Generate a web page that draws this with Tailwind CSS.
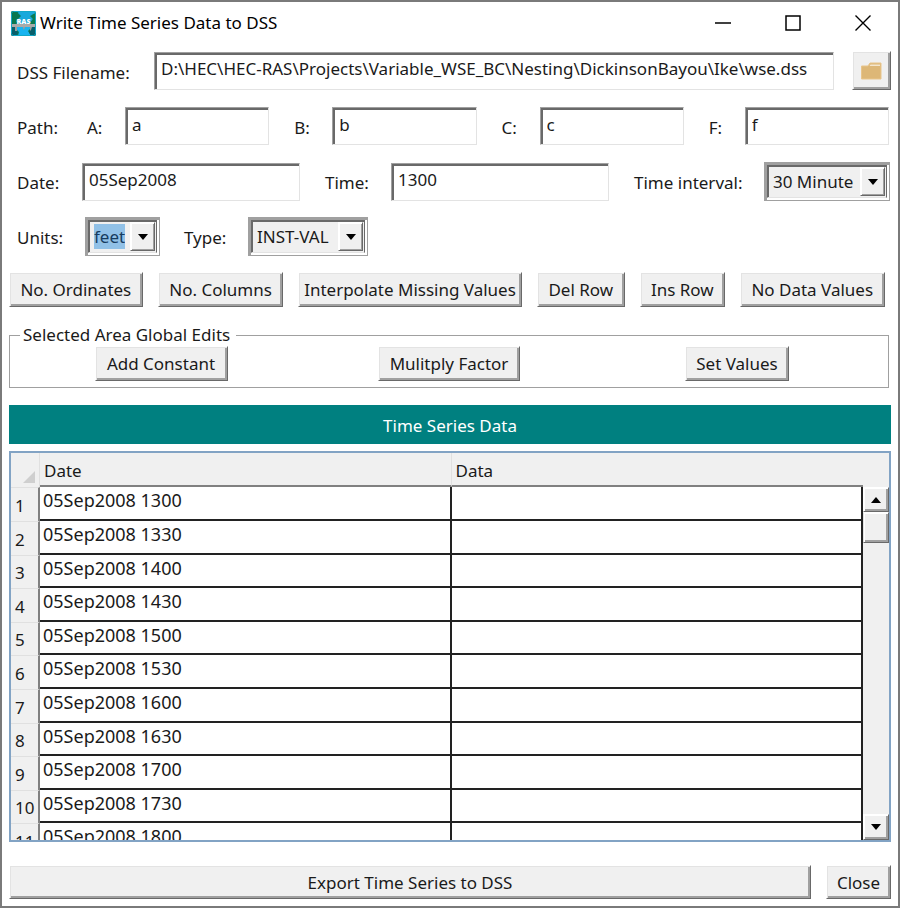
<!DOCTYPE html>
<html lang="en">
<head>
<meta charset="utf-8">
<title>Write Time Series Data to DSS</title>
<script src="https://cdn.jsdelivr.net/npm/@tailwindcss/browser@4"></script>
</head>
<body class="bg-white">
<div class="flex h-screen min-h-[600px] flex-col border-2 border-[#7a7a7a] bg-white font-['Noto_Sans','Open_Sans',sans-serif] text-[17px] leading-[22px] text-[#1a1a1a]">

  <header class="flex h-[42px] shrink-0 items-center pl-[9px] text-black">
    <svg class="mr-1 size-[25px] shrink-0" viewBox="0 0 25 25" aria-hidden="true">
      <defs><clipPath id="tile"><rect width="25" height="25" rx="2"/></clipPath></defs>
      <g clip-path="url(#tile)">
        <rect width="25" height="25" fill="#087a55"/>
        <path d="M5 0H25V2L19 5L22 8L17 14H8L5 10L10 5Z" fill="#19a9dc"/>
        <path d="M0 0H9L5 3L9 5L4 8L6 13H0Z" fill="#08784f"/>
        <path d="M21 4L25 2V13H20L22 8Z" fill="#0b7c50"/>
        <path d="M0 13H25V16H0Z" fill="#a8aaa9"/>
        <path d="M4 16H6V20H4ZM12 16H14V19H12ZM19 16H21V20H19Z" fill="#9a9c9c"/>
        <path d="M6 16H12V17L13 19L14 16H19V18L17 20L20 25H7L8 21L6 19Z" fill="#18b4f0"/>
        <path d="M0 16H4V20H6L7 22L5 25H0ZM21 16H25V25H20L18 21L20 19Z" fill="#075f6b"/>
        <rect x=".5" y=".5" width="24" height="24" rx="2" fill="none" stroke="#12a8c8"/>
      </g>
      <text x="12.500" y="12.500" text-anchor="middle" font-family="Open Sans, sans-serif" font-size="7" font-weight="800" fill="#fff">RAS</text>
    </svg>
    <h1 class="flex-1">Write Time Series Data to DSS</h1>
    <button type="button" aria-label="Minimize" class="flex h-full w-[70px] items-center justify-center"><svg width="16" height="16" viewBox="0 0 16 16"><path d="M0 8H16" stroke="#000" stroke-width="1.500"/></svg></button>
    <button type="button" aria-label="Maximize" class="flex h-full w-[70px] items-center justify-center"><svg width="16" height="16" viewBox="0 0 16 16"><rect x="1" y="1" width="14" height="14" fill="none" stroke="#000" stroke-width="1.500"/></svg></button>
    <button type="button" aria-label="Close window" class="flex h-full w-[70px] items-center justify-center"><svg width="16" height="16" viewBox="0 0 16 16"><path d="M.5 .5L15.500 15.500M15.500 .5L.5 15.500" stroke="#000" stroke-width="1.400"/></svg></button>
  </header>

  <main class="flex min-h-0 flex-1 flex-col pt-[7px] pb-[7px]">
    <div class="mb-[17px] flex items-center pr-[7px] pl-[15px]">
      <label for="file" class="w-[137px] pt-1">DSS Filename:</label>
      <input id="file" value="D:\HEC\HEC-RAS\Projects\Variable_WSE_BC\Nesting\DickinsonBayou\Ike\wse.dss" class="h-[38px] min-w-0 flex-1 border border-t-[#a0a0a0] border-r-[#e3e3e3] border-b-[#e3e3e3] border-l-[#a0a0a0] pb-1 pl-[6px] shadow-[inset_2px_2px_0_#696969] outline-none">
      <button type="button" aria-label="Browse" class="ml-[18px] flex h-[39px] w-[39px] items-center justify-center border border-t-white border-r-[#696969] border-b-[#696969] border-l-white bg-[#f0f0f0] shadow-[inset_1px_1px_0_#e3e3e3,inset_-2px_-2px_0_#a0a0a0]">
        <svg width="21" height="18" viewBox="0 0 21 18"><path d="M.5 4H7L9 1H20V17H.5Z" fill="#ddb777" stroke="#e8c58c"/><path d="M9.500 2.500H19V4H8.500Z" fill="#f4e6cd"/></svg>
      </button>
    </div>

    <div class="mb-[17px] flex items-center pr-[9px] pl-[15px]">
      <span class="w-[70px] pt-1">Path:</span>
      <label for="a" class="w-[38px] pt-1">A:</label>
      <input id="a" value="a" class="mr-[25px] h-[38px] min-w-0 flex-1 border border-t-[#a0a0a0] border-r-[#e3e3e3] border-b-[#e3e3e3] border-l-[#a0a0a0] pb-1 pl-[6px] shadow-[inset_2px_2px_0_#696969] outline-none">
      <label for="b" class="w-[38px] pt-1">B:</label>
      <input id="b" value="b" class="mr-[25px] h-[38px] min-w-0 flex-1 border border-t-[#a0a0a0] border-r-[#e3e3e3] border-b-[#e3e3e3] border-l-[#a0a0a0] pb-1 pl-[6px] shadow-[inset_2px_2px_0_#696969] outline-none">
      <label for="c" class="w-[38px] pt-1">C:</label>
      <input id="c" value="c" class="mr-[25px] h-[38px] min-w-0 flex-1 border border-t-[#a0a0a0] border-r-[#e3e3e3] border-b-[#e3e3e3] border-l-[#a0a0a0] pb-1 pl-[6px] shadow-[inset_2px_2px_0_#696969] outline-none">
      <label for="f" class="w-[36px] pt-1">F:</label>
      <input id="f" value="f" class="h-[38px] min-w-0 flex-1 border border-t-[#a0a0a0] border-r-[#e3e3e3] border-b-[#e3e3e3] border-l-[#a0a0a0] pb-1 pl-[6px] shadow-[inset_2px_2px_0_#696969] outline-none">
    </div>

    <div class="mb-4 flex items-center pr-2 pl-[15px]">
      <label for="date" class="w-[65px] pt-[2px]">Date:</label>
      <input id="date" value="05Sep2008" class="mr-[25px] h-[38px] min-w-0 flex-1 border border-t-[#a0a0a0] border-r-[#e3e3e3] border-b-[#e3e3e3] border-l-[#a0a0a0] pb-1 pl-[6px] shadow-[inset_2px_2px_0_#696969] outline-none">
      <label for="time" class="w-[66px] pt-[2px]">Time:</label>
      <input id="time" value="1300" class="mr-[25px] h-[38px] min-w-0 flex-1 border border-t-[#a0a0a0] border-r-[#e3e3e3] border-b-[#e3e3e3] border-l-[#a0a0a0] pb-1 pl-[6px] shadow-[inset_2px_2px_0_#696969] outline-none">
      <label for="interval" class="w-[130px] pt-[2px]">Time interval:</label>
      <div class="flex h-[39px] w-[126px] border border-[#a0a0a0] p-[2px] shadow-[inset_2px_2px_0_#a0a0a0]">
        <div class="flex min-w-0 flex-1 border border-t-[#696969] border-r-[#696969] border-b-[#e3e3e3] border-l-[#696969] bg-[#f0f0f0] pl-[5px] shadow-[inset_1px_1px_0_#696969]">
          <select id="interval" class="min-w-0 flex-1 appearance-none outline-none"><option>30 Minute</option></select>
          <span class="m-px flex w-[25px] items-center justify-center border border-t-white border-r-[#696969] border-b-[#696969] border-l-white shadow-[inset_1px_1px_0_#fff,inset_-1px_-1px_0_#a0a0a0]"><svg width="10" height="6" viewBox="0 0 10 6"><path d="M0 0H10L5 6Z"/></svg></span>
        </div>
      </div>
    </div>

    <div class="mb-4 flex items-center pl-[15px]">
      <label for="units" class="w-[68px] pt-[2px]">Units:</label>
      <div class="mr-6 flex h-[39px] w-[75px] border border-[#a0a0a0] p-[2px] shadow-[inset_2px_2px_0_#a0a0a0]">
        <div class="flex min-w-0 flex-1 items-stretch border border-t-[#696969] border-r-[#696969] border-b-[#e3e3e3] border-l-[#696969] bg-[#f0f0f0] pl-[5px] shadow-[inset_1px_1px_0_#696969]">
          <select id="units" class="my-[3px] mr-1 min-w-0 flex-1 appearance-none bg-[#91c1e7] text-[#163c60] outline-none"><option>feet</option></select>
          <span class="m-px flex w-[25px] items-center justify-center border border-t-white border-r-[#696969] border-b-[#696969] border-l-white shadow-[inset_1px_1px_0_#fff,inset_-1px_-1px_0_#a0a0a0]"><svg width="10" height="6" viewBox="0 0 10 6"><path d="M0 0H10L5 6Z"/></svg></span>
        </div>
      </div>
      <label for="type" class="w-16 pt-[2px]">Type:</label>
      <div class="flex h-[39px] w-[120px] border border-[#a0a0a0] p-[2px] shadow-[inset_2px_2px_0_#a0a0a0]">
        <div class="flex min-w-0 flex-1 border border-t-[#696969] border-r-[#696969] border-b-[#e3e3e3] border-l-[#696969] bg-[#f0f0f0] pl-[5px] shadow-[inset_1px_1px_0_#696969]">
          <select id="type" class="min-w-0 flex-1 appearance-none outline-none"><option>INST-VAL</option></select>
          <span class="m-px flex w-[25px] items-center justify-center border border-t-white border-r-[#696969] border-b-[#696969] border-l-white shadow-[inset_1px_1px_0_#fff,inset_-1px_-1px_0_#a0a0a0]"><svg width="10" height="6" viewBox="0 0 10 6"><path d="M0 0H10L5 6Z"/></svg></span>
        </div>
      </div>
    </div>

    <div class="mb-[17px] flex h-[35px] shrink-0 gap-[15px] pr-[13px] pl-[7px] whitespace-nowrap">
      <button type="button" class="min-w-0 flex-[134] border border-t-white border-r-[#696969] border-b-[#696969] border-l-white bg-[#f0f0f0] shadow-[inset_1px_1px_0_#e3e3e3,inset_-2px_-2px_0_#a0a0a0]">No. Ordinates</button>
      <button type="button" class="min-w-0 flex-[126] border border-t-white border-r-[#696969] border-b-[#696969] border-l-white bg-[#f0f0f0] shadow-[inset_1px_1px_0_#e3e3e3,inset_-2px_-2px_0_#a0a0a0]">No. Columns</button>
      <button type="button" class="min-w-0 flex-[225] border border-t-white border-r-[#696969] border-b-[#696969] border-l-white bg-[#f0f0f0] shadow-[inset_1px_1px_0_#e3e3e3,inset_-2px_-2px_0_#a0a0a0]">Interpolate Missing Values</button>
      <button type="button" class="min-w-0 flex-[88] border border-t-white border-r-[#696969] border-b-[#696969] border-l-white bg-[#f0f0f0] shadow-[inset_1px_1px_0_#e3e3e3,inset_-2px_-2px_0_#a0a0a0]">Del Row</button>
      <button type="button" class="min-w-0 flex-[84] border border-t-white border-r-[#696969] border-b-[#696969] border-l-white bg-[#f0f0f0] shadow-[inset_1px_1px_0_#e3e3e3,inset_-2px_-2px_0_#a0a0a0]">Ins Row</button>
      <button type="button" class="min-w-0 flex-[146] border border-t-white border-r-[#696969] border-b-[#696969] border-l-white bg-[#f0f0f0] shadow-[inset_1px_1px_0_#e3e3e3,inset_-2px_-2px_0_#a0a0a0]">No Data Values</button>
    </div>

    <fieldset class="mr-[9px] mb-[17px] ml-[7px] border border-[#a0a0a0] px-[7px] pb-[6px]">
      <legend class="ml-[3px] pr-[6px] pl-[3px]">Selected Area Global Edits</legend>
      <div class="grid grid-cols-3 justify-items-center">
        <button type="button" class="h-[35px] w-[133px] border border-t-white border-r-[#696969] border-b-[#696969] border-l-white bg-[#f0f0f0] shadow-[inset_1px_1px_0_#e3e3e3,inset_-2px_-2px_0_#a0a0a0]">Add Constant</button>
        <button type="button" class="h-[35px] w-[142px] border border-t-white border-r-[#696969] border-b-[#696969] border-l-white bg-[#f0f0f0] shadow-[inset_1px_1px_0_#e3e3e3,inset_-2px_-2px_0_#a0a0a0]">Mulitply Factor</button>
        <button type="button" class="h-[35px] w-[104px] border border-t-white border-r-[#696969] border-b-[#696969] border-l-white bg-[#f0f0f0] shadow-[inset_1px_1px_0_#e3e3e3,inset_-2px_-2px_0_#a0a0a0]">Set Values</button>
      </div>
    </fieldset>

    <h2 class="mx-[7px] mb-[7px] flex h-[39px] shrink-0 items-center justify-center bg-[#008080] pt-[2px] text-white">Time Series Data</h2>

    <div class="mx-[7px] mb-[23px] flex min-h-0 flex-1 border-2 border-[#82a3c4] bg-[#f0f0f0]">
      <div class="min-h-0 flex-1 overflow-hidden">
        <table class="w-full table-fixed border-separate border-spacing-0 text-left">
          <thead>
            <tr class="h-[34px]">
              <th class="w-[29px] border-r border-[#e0e0e0] p-0 align-bottom" aria-label="Select all"><svg class="mb-1 ml-3" width="12" height="12" viewBox="0 0 12 12"><path d="M12 0V12H0Z" fill="#cfcfcf"/></svg></th>
              <th class="border-r border-b-2 border-r-[#e0e0e0] border-b-[#808080] p-0 pt-1 pl-1 font-normal">Date</th>
              <th class="border-b-2 border-[#808080] p-0 pt-1 pl-1 font-normal">Data</th>
            </tr>
          </thead>
          <tbody id="rows" class="bg-white"></tbody>
        </table>
      </div>
      <div class="flex w-[26px] flex-col pt-[34px]">
        <button type="button" aria-label="Scroll up" class="flex h-[25px] items-center justify-center border border-t-white border-r-[#696969] border-b-[#696969] border-l-white shadow-[inset_1px_1px_0_#fff,inset_-2px_-2px_0_#a0a0a0]"><svg width="10" height="6" viewBox="0 0 10 6"><path d="M0 6H10L5 0Z"/></svg></button>
        <div class="h-[31px] border border-t-white border-r-[#696969] border-b-[#696969] border-l-[#e3e3e3] shadow-[inset_1px_1px_0_#fff,inset_-2px_-2px_0_#a0a0a0]"></div>
        <div class="flex-1"></div>
        <button type="button" aria-label="Scroll down" class="flex h-[26px] items-center justify-center border border-t-white border-r-[#696969] border-b-[#696969] border-l-white shadow-[inset_1px_1px_0_#fff,inset_-2px_-2px_0_#a0a0a0]"><svg width="10" height="6" viewBox="0 0 10 6"><path d="M0 0H10L5 6Z"/></svg></button>
      </div>
    </div>

    <div class="flex h-[34px] shrink-0 gap-[15px] px-[7px]">
      <button type="button" class="flex-1 border border-t-white border-r-[#696969] border-b-[#696969] border-l-white bg-[#f0f0f0] pt-[2px] shadow-[inset_1px_1px_0_#e3e3e3,inset_-2px_-2px_0_#a0a0a0]">Export Time Series to DSS</button>
      <button type="button" class="w-[65px] border border-t-white border-r-[#696969] border-b-[#696969] border-l-white bg-[#f0f0f0] pt-[2px] shadow-[inset_1px_1px_0_#e3e3e3,inset_-2px_-2px_0_#a0a0a0]">Close</button>
    </div>
  </main>
</div>
<script>
  const times = ['1300','1330','1400','1430','1500','1530','1600','1630','1700','1730','1800'];
  document.getElementById('rows').innerHTML = times.map((t, i) => `
    <tr class="h-[34px] nth-[5n]:h-[33px] nth-[5n+3]:h-[33px]">
      <th class="border-t border-r-2 border-t-[#e0e0e0] border-r-[#808080] bg-[#f0f0f0] p-0 pt-[2px] pl-1 font-normal">${i + 1}</th>
      <td class="border-r-2 border-b-2 border-[#222] p-0 pb-[6px] pl-[3px] text-lg leading-[22px]">05Sep2008 ${t}</td>
      <td class="border-r-2 border-b-2 border-[#222] p-0"></td>
    </tr>`).join('');
</script>
</body>
</html>
